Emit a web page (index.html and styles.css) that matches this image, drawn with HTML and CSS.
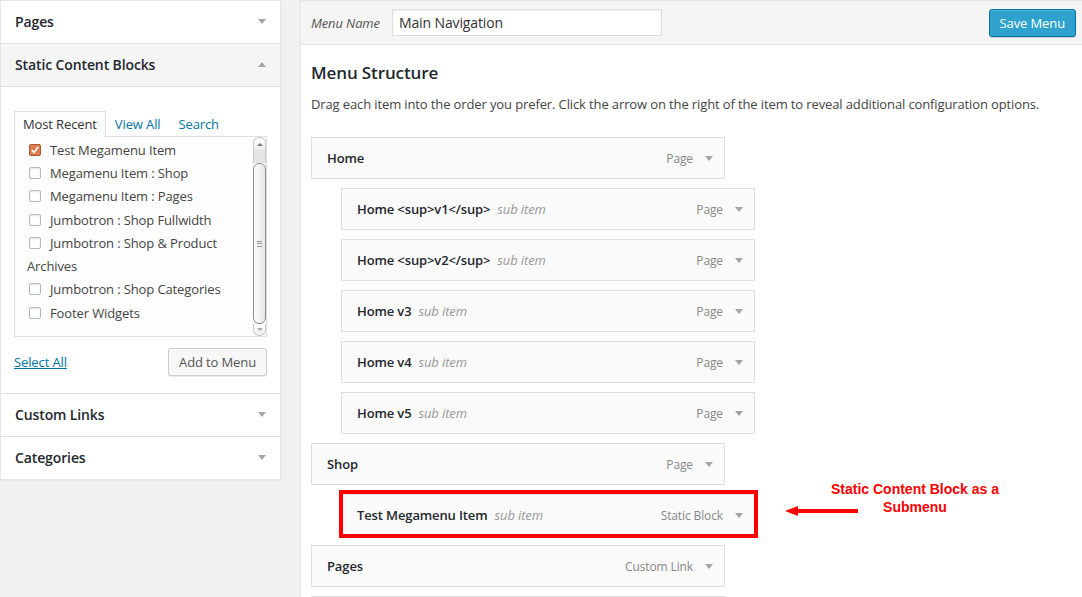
FILE: index.html
```html
<!DOCTYPE html>
<html>
<head>
<meta charset="utf-8">
<title>Menus</title>
<link rel="stylesheet" href="styles.css">
</head>
<body>
<div class="page">
  <aside class="side">
    <div class="acc-head"><span>Pages</span><i class="tri down"></i></div>
    <div class="acc-head open"><span>Static Content Blocks</span><i class="tri up"></i></div>
    <div class="acc-body">
      <ul class="tabs">
        <li class="active">Most Recent</li>
        <li><a>View All</a></li>
        <li><a>Search</a></li>
      </ul>
      <div class="listbox">
        <ul class="checklist">
          <li><span class="cb checked"><svg viewBox="0 0 12 12" width="10" height="10"><polyline points="2,6 5,9 10,2" fill="none" stroke="#fff" stroke-width="2"/></svg></span>Test Megamenu Item</li>
          <li><span class="cb"></span>Megamenu Item : Shop</li>
          <li><span class="cb"></span>Megamenu Item : Pages</li>
          <li><span class="cb"></span>Jumbotron : Shop Fullwidth</li>
          <li><span class="cb"></span>Jumbotron : Shop &amp; Product</li>
          <li class="group">Archives</li>
          <li><span class="cb"></span>Jumbotron : Shop Categories</li>
          <li><span class="cb"></span>Footer Widgets</li>
        </ul>
        <div class="sb">
          <div class="sb-btn sb-up"><i class="mini-tri up"></i></div>
          <div class="sb-gap"></div>
          <div class="sb-thumb"><span class="grip"></span></div>
          <div class="sb-btn sb-down"><i class="mini-tri down"></i></div>
        </div>
      </div>
      <div class="actions">
        <a class="select-all">Select All</a>
        <button class="btn">Add to Menu</button>
      </div>
    </div>
    <div class="acc-head"><span>Custom Links</span><i class="tri down"></i></div>
    <div class="acc-head last"><span>Categories</span><i class="tri down"></i></div>
  </aside>

  <main class="menu-panel">
    <div class="menu-header">
      <label class="menu-label">Menu Name</label>
      <input class="menu-name" type="text" value="Main Navigation">
      <button class="primary">Save Menu</button>
    </div>
    <div class="menu-body">
      <h3>Menu Structure</h3>
      <p class="desc">Drag each item into the order you prefer. Click the arrow on the right of the item to reveal additional configuration options.</p>
      <ul class="menu-items">
        <li class="item"><span class="title">Home</span><span class="controls"><span class="type">Page</span><i class="tri down"></i></span></li>
        <li class="item sub"><span class="title">Home &lt;sup&gt;v1&lt;/sup&gt;</span><span class="note">sub item</span><span class="controls"><span class="type">Page</span><i class="tri down"></i></span></li>
        <li class="item sub"><span class="title">Home &lt;sup&gt;v2&lt;/sup&gt;</span><span class="note">sub item</span><span class="controls"><span class="type">Page</span><i class="tri down"></i></span></li>
        <li class="item sub"><span class="title">Home v3</span><span class="note">sub item</span><span class="controls"><span class="type">Page</span><i class="tri down"></i></span></li>
        <li class="item sub"><span class="title">Home v4</span><span class="note">sub item</span><span class="controls"><span class="type">Page</span><i class="tri down"></i></span></li>
        <li class="item sub"><span class="title">Home v5</span><span class="note">sub item</span><span class="controls"><span class="type">Page</span><i class="tri down"></i></span></li>
        <li class="item"><span class="title">Shop</span><span class="controls"><span class="type">Page</span><i class="tri down"></i></span></li>
        <li class="item sub"><span class="title">Test Megamenu Item</span><span class="note">sub item</span><span class="controls"><span class="type">Static Block</span><i class="tri down"></i></span></li>
        <li class="item"><span class="title">Pages</span><span class="controls"><span class="type">Custom Link</span><i class="tri down"></i></span></li>
        <li class="item"></li>
      </ul>
    </div>
  </main>

  <div class="red-box"></div>
  <svg class="red-arrow" width="74" height="14" viewBox="0 0 74 14">
    <polygon points="0,7 13,2 13,12" fill="#f00"/>
    <rect x="11" y="5" width="62" height="4" fill="#f00"/>
  </svg>
  <div class="callout">Static Content Block as a<br>Submenu</div>
</div>
</body>
</html>
```

FILE: styles.css
```css
* { box-sizing: border-box; }
html, body { margin: 0; height: 100%; }
body {
  background: #f1f1f1;
  font-family: "Open Sans", "DejaVu Sans", sans-serif;
  font-size: 13px;
  letter-spacing: -0.12px;
  color: #444;
  overflow: hidden;
}
.page {
  position: relative;
  display: flex;
  align-items: flex-start;
  gap: 19px;
}

/* ---------- left accordion ---------- */
.side {
  width: 281px;
  flex: none;
  background: #fff;
  border: 1px solid #e5e5e5;
  box-shadow: 0 1px 2px rgba(0,0,0,.06);
}
.acc-head {
  height: 43px;
  border-bottom: 1px solid #dfdfdf;
  display: flex;
  align-items: center;
  justify-content: space-between;
  padding: 0 14px 1px;
  font-size: 14px;
  font-weight: 600;
  color: #23282d;
}
.acc-head.open { background: #f5f5f5; }
.acc-head.last { border-bottom: 0; height: 42px; }

.tri {
  display: block;
  width: 0; height: 0;
  border-left: 4px solid transparent;
  border-right: 4px solid transparent;
}
.tri.down { border-top: 5px solid #a0a5aa; }
.tri.up { border-bottom: 5px solid #a0a5aa; }

.acc-body {
  padding: 24px 13px 17px;
  border-bottom: 1px solid #dfdfdf;
}
.tabs {
  list-style: none;
  margin: 0 0 -1px;
  padding: 0;
  display: flex;
  position: relative;
  z-index: 1;
}
.tabs li {
  padding: 2px 8px 3px;
  border: 1px solid transparent;
  border-bottom: 0;
  line-height: 20px;
  color: #0074a2;
}
.tabs li.active {
  border-color: #dfdfdf;
  background: #fdfdfd;
  color: #333;
}
.listbox {
  display: flex;
  height: 201px;
  border: 1px solid #dfdfdf;
  background: #fdfdfd;
}
.checklist {
  flex: 1;
  list-style: none;
  margin: 0;
  padding: 1px 0 0 14px;
}
.checklist li {
  display: flex;
  align-items: center;
  height: 23.3px;
  color: #444;
}
.checklist li.group { margin-left: -2px; }
.cb {
  width: 12px;
  height: 12px;
  flex: none;
  margin-right: 9px;
  border: 1px solid #b4b9be;
  border-radius: 2px;
  background: #fff;
  box-shadow: inset 0 1px 2px rgba(0,0,0,.1);
  display: flex;
  align-items: center;
  justify-content: center;
}
.cb.checked {
  background: #e07a4e;
  border-color: #a9552f;
  box-shadow: none;
}

/* fake scrollbar */
.sb {
  width: 13px;
  flex: none;
  display: flex;
  flex-direction: column;
}
.sb-btn {
  height: 13px;
  border: 1px solid #c9c9c9;
  background: linear-gradient(#ffffff, #efefef);
  display: flex;
  align-items: center;
  justify-content: center;
}
.sb-up { border-radius: 6px 6px 0 0; border-bottom: 0; }
.sb-down { border-radius: 0 0 6px 6px; border-top: 0; height: 12px; }
.sb-gap {
  height: 13px;
  background: #e4e4e4;
  border-left: 1px solid #c9c9c9;
  border-right: 1px solid #c9c9c9;
}
.sb-thumb {
  flex: 1;
  border: 1px solid #8d8d8d;
  border-radius: 6px;
  background: linear-gradient(to right, #fbfbfb, #e6e6e6);
  display: flex;
  align-items: center;
  justify-content: center;
}
.grip {
  width: 5px;
  height: 6px;
  border-top: 1px solid #999;
  border-bottom: 1px solid #999;
  background: linear-gradient(#999, #999) center / 5px 1px no-repeat;
}
.mini-tri {
  width: 0; height: 0;
  border-left: 3px solid transparent;
  border-right: 3px solid transparent;
}
.mini-tri.up { border-bottom: 3px solid #777; }
.mini-tri.down { border-top: 3px solid #aaa; }

.actions {
  display: flex;
  justify-content: space-between;
  align-items: center;
  margin-top: 11px;
}
.select-all {
  color: #0074a2;
  text-decoration: underline;
}
.btn {
  height: 28px;
  padding: 0 10px;
  border: 1px solid #cccccc;
  border-radius: 3px;
  background: #f7f7f7;
  box-shadow: inset 0 1px 0 #fff, 0 1px 0 rgba(0,0,0,.08);
  font: 13px "Open Sans", sans-serif;
  letter-spacing: -0.12px;
  color: #555;
}

/* ---------- right panel ---------- */
.menu-panel {
  width: 787px;
  flex: none;
  min-height: 800px;
  background: #fff;
  border: 1px solid #e5e5e5;
}
.menu-header {
  height: 44px;
  display: flex;
  align-items: center;
  padding: 0 10px;
  background: #f5f5f5;
  border-bottom: 1px solid #dfdfdf;
}
.menu-label {
  font-style: italic;
  color: #555;
  margin-right: 12px;
}
.menu-name {
  width: 270px;
  height: 27px;
  padding: 0 6px;
  border: 1px solid #dddddd;
  box-shadow: inset 0 1px 2px rgba(0,0,0,.07);
  font: 14px "Open Sans", sans-serif;
  letter-spacing: -0.12px;
  color: #333;
  background: #fff;
}
.primary {
  margin-left: auto;
  height: 28px;
  padding: 0 10px;
  border: 1px solid #0074a2;
  border-radius: 3px;
  background: #2ea2cc;
  box-shadow: inset 0 1px 0 rgba(120,200,230,.5), 0 1px 0 rgba(0,0,0,.15);
  font: 13px "Open Sans", sans-serif;
  letter-spacing: -0.12px;
  color: #fff;
}
.menu-body { padding: 16px 10px 0; }
.menu-body h3 {
  margin: 0;
  font-size: 17px;
  font-weight: 600;
  line-height: 24px;
  color: #23282d;
}
.desc {
  margin: 9px 0 23px;
  line-height: 20px;
  color: #444;
}
.menu-items {
  list-style: none;
  margin: 0;
  padding: 0;
}
.item {
  width: 414px;
  height: 42px;
  margin-bottom: 9px;
  border: 1px solid #dfdfdf;
  background: #fafafa;
  display: flex;
  align-items: center;
  padding: 0 11px 0 15px;
}
.item.sub { margin-left: 30px; }
.title { font-weight: 600; color: #23282d; }
.note { font-style: italic; color: #999; margin-left: 7px; }
.controls {
  margin-left: auto;
  display: flex;
  align-items: center;
  gap: 12px;
  color: #888;
}
.type { font-size: 12px; }

/* ---------- annotation overlay ---------- */
.red-box {
  position: absolute;
  left: 339px;
  top: 490px;
  width: 419px;
  height: 48px;
  border: 4px solid #ff0000;
}
.red-arrow {
  position: absolute;
  left: 785px;
  top: 504px;
}
.callout {
  position: absolute;
  left: 815px;
  top: 480px;
  width: 200px;
  text-align: center;
  font: bold 14px/18px "Liberation Sans", Arial, sans-serif;
  letter-spacing: 0;
  color: #ff0000;
}
```
